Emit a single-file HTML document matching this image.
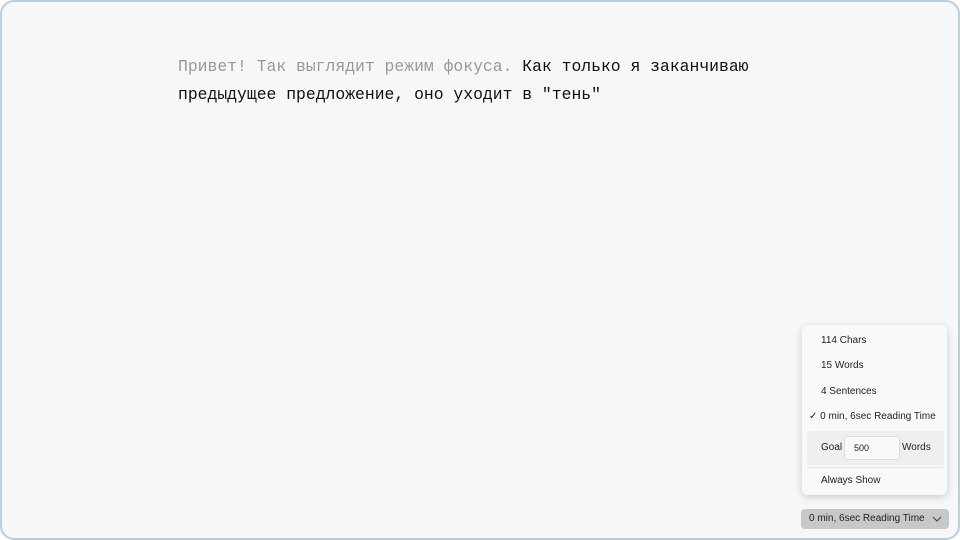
<!DOCTYPE html>
<html><head><meta charset="utf-8"><style>
html,body{margin:0;padding:0;background:#fff;}
.frame{position:absolute;left:0;top:0;width:956px;height:536px;border:2px solid #b9cfe0;border-radius:14px;background:#f7f7f7;overflow:hidden;}
.text{position:absolute;left:176px;top:51px;font-family:"Liberation Mono",monospace;font-size:16.4px;line-height:28px;color:#111;white-space:pre;}
.dim{color:#999;}
.menu{position:absolute;left:800px;top:323px;width:145px;height:170px;background:#f9f9f9;border-radius:6px;box-shadow:0 2px 8px rgba(0,0,0,.18);font-family:"Liberation Sans",sans-serif;font-size:10px;color:#222;}
.item{position:absolute;left:19px;}
.goal{position:absolute;left:5px;top:106px;width:137px;height:34px;background:#efefef;border-radius:3px;}
.inp{position:absolute;left:37px;top:5px;width:54px;height:22px;background:#f9f9f9;border:1px solid #ddd;border-radius:3px;font-size:9px;line-height:22px;text-indent:9px;}
.sep{position:absolute;left:5px;top:142px;width:137px;height:1px;background:#e6e6e6;}
.btn{position:absolute;left:799px;top:507px;width:148px;height:20px;background:#c8c8c8;border-radius:4px;font-family:"Liberation Sans",sans-serif;font-size:10px;line-height:20px;color:#222;}
</style></head><body>
<div class="frame">
<div class="text"><span class="dim">Привет! Так выглядит режим фокуса.</span> Как только я заканчиваю
предыдущее предложение, оно уходит в "тень"</div>
<div class="menu">
<div class="item" style="top:10px">114 Chars</div>
<div class="item" style="top:35px">15 Words</div>
<div class="item" style="top:61px">4 Sentences</div>
<div class="item" style="top:86px;left:7px">✓ 0 min, 6sec Reading Time</div>
<div class="goal"><span style="position:absolute;left:14px;top:11px">Goal</span><div class="inp">500</div><span style="position:absolute;left:95px;top:11px">Words</span></div>
<div class="sep"></div>
<div class="item" style="top:150px">Always Show</div>
</div>
<div class="btn"><span style="position:absolute;left:8px">0 min, 6sec Reading Time</span>
<svg style="position:absolute;left:131px;top:6px" width="10" height="8"><path d="M1 2 L5 6 L9 2" fill="none" stroke="#444" stroke-width="1"/></svg></div>
</div>
</body></html>
